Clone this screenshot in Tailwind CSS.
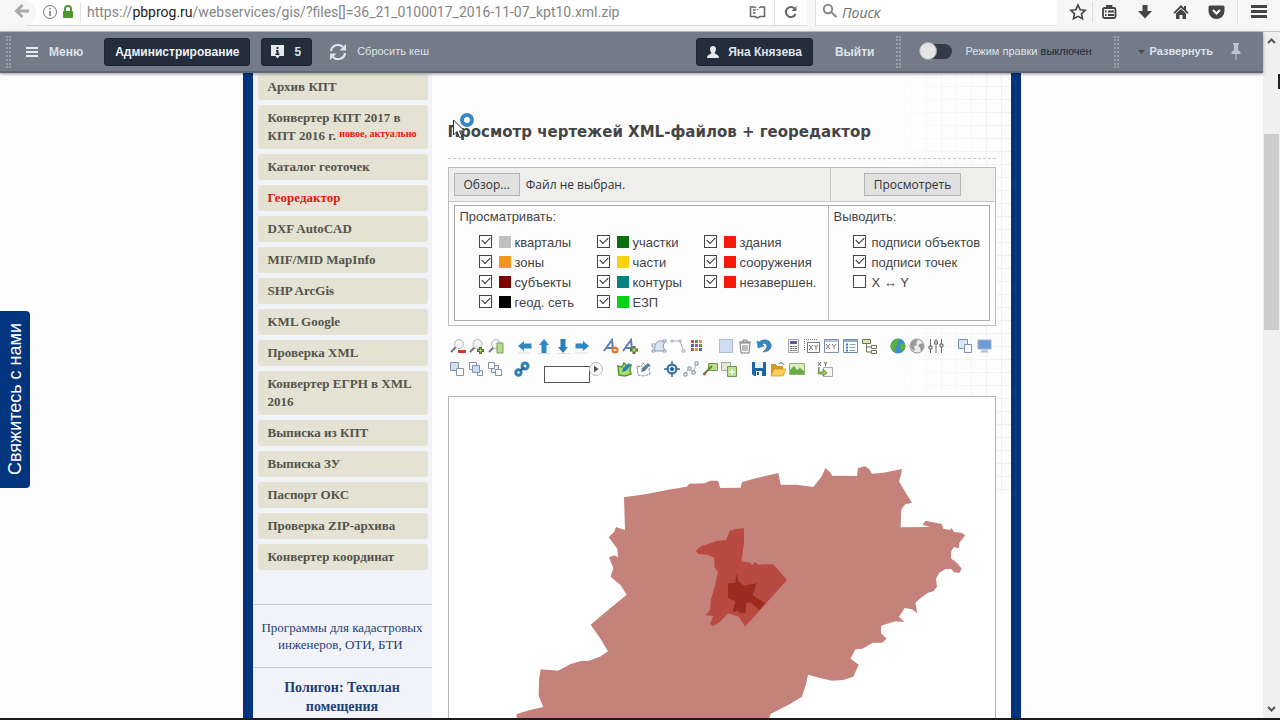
<!DOCTYPE html>
<html lang="ru">
<head>
    <meta charset="UTF-8">
    <meta name="viewport" content="width=device-width, initial-scale=1.0">
    <title>Просмотр чертежей XML-файлов + георедактор</title>
    <script src="https://cdn.jsdelivr.net/npm/@tailwindcss/browser@4"></script>
</head>
<body class="flex flex-col h-screen overflow-hidden bg-[#fdfdfd] border-b-2 border-[#1b1b1d] font-['Liberation_Sans',sans-serif]">

    <!-- Browser toolbar -->
    <header class="flex shrink-0 h-8 bg-[#f6f6f6] border-b border-[#c4c6ca] text-[#4a4a4a] font-['Open_Sans',sans-serif]">
        <div class="flex flex-1 items-center h-[26px] bg-white border-b border-[#d8d8d8]">
            <button aria-label="Назад" class="flex items-center justify-center w-9 h-[26px] rounded-r-full bg-[#f6f6f6] text-[#a9a9a9]">
                <svg class="size-4 mb-1 ml-2" viewBox="0 0 16 16" fill="none" stroke="currentColor" stroke-width="3"><path d="M15 8H3M8.500 2L2.500 8l6 6"/></svg>
            </button>
            <svg class="size-4 ml-[6px] mb-[2px]" viewBox="0 0 16 16" fill="none" stroke="#777"><circle cx="8" cy="8" r="6.500"/><path d="M8 7v5M8 4v1.500" stroke-width="1.500"/></svg>
            <svg class="w-3 h-4 ml-1 mb-[2px]" viewBox="0 0 12 16"><path d="M3 8V5a3 3 0 0 1 6 0v3" fill="none" stroke="#4c9a2e" stroke-width="2"/><rect x="1" y="7" width="10" height="7" rx="1" fill="#4c9a2e"/></svg>
            <div class="w-px h-5 ml-[6px] bg-[#e4e4e4]"></div>
            <div class="relative flex-1 ml-[6px] mb-[1px]">
                <p class="text-[14px] leading-6 text-[#858585] whitespace-nowrap font-['Roboto',sans-serif]">https://<span class="text-[#222]">pbprog.ru</span>/webservices/gis/?files[]=36_21_0100017_2016-11-07_kpt10.xml.zip</p>
                <input aria-label="Адрес" type="text" class="absolute inset-0 w-full bg-transparent outline-none">
            </div>
            <button aria-label="Режим чтения" class="mr-[8px] mb-[2px]">
                <svg class="w-[17px] h-4" viewBox="0 0 17 16" fill="none" stroke="#666" stroke-width="1.500"><path d="M7 4L5.500 3h-4v9.500H6l2.500 1.500 2.500-1.500h4.500V3h-4L10 4M8.500 5v1M4 6h2.500M4 9h2.500"/></svg>
            </button>
            <div class="w-px h-full bg-[#ddd]"></div>
            <button aria-label="Обновить" class="mx-[8px] mb-[2px]">
                <svg class="size-4" viewBox="0 0 16 16" fill="none" stroke="#666" stroke-width="2"><path d="M12.500 10A5 5 0 1 1 11.500 4.500"/><path d="M13.500 2v5h-5z" fill="#666" stroke="none"/></svg>
            </button>
        </div>
        <div class="flex items-center w-[242px] h-[26px] ml-[8px] pl-[6px] bg-white border-b border-l border-[#dedede]">
            <svg class="size-4 mb-[3px]" viewBox="0 0 16 16" fill="none" stroke="#888" stroke-width="2"><circle cx="6" cy="6" r="4.200"/><path d="M9 9l5.500 5"/></svg>
            <input aria-label="Поиск" type="search" placeholder="Поиск" class="w-40 ml-[4px] text-[14px] leading-6 italic outline-none placeholder:text-[#6d6d6d]">
        </div>
        <div class="flex items-center h-6 pl-[12px]">
            <button aria-label="Закладка"><svg class="size-[18px]" viewBox="0 0 18 18" fill="none" stroke="#444" stroke-width="1.600"><path d="M9 2l2.200 4.700 5 .6-3.700 3.500 1 5L9 13.300l-4.500 2.500 1-5L1.800 7.300l5-.6z"/></svg></button>
            <div class="w-px h-5 mx-[5px] bg-[#ddd]"></div>
            <button aria-label="Библиотека" class="ml-[3px]"><svg class="size-4" viewBox="0 0 16 16" fill="none" stroke="#444" stroke-width="1.800"><rect x="2" y="4" width="12.500" height="10" rx="1.500"/><path d="M6 4V2h4.500v2M4 7.500h1.500M7 7.500h6M4 11h1.500M7 11h6"/></svg></button>
            <button aria-label="Загрузки" class="ml-[20px]"><svg class="size-4" viewBox="0 0 16 16" fill="#444"><path d="M5.500 1h5v6H15l-7 7.500L1 7h4.500z"/></svg></button>
            <button aria-label="Домой" class="ml-[20px]"><svg class="size-4" viewBox="0 0 16 16" fill="#444"><path d="M8 1L.5 8.500l1.300 1.200L8 3.800l6.200 5.900 1.300-1.200-2.500-2.500V2h-2v2z"/><path d="M3 9.500L8 5l5 4.500V15H9.500v-4h-3v4H3z"/></svg></button>
            <button aria-label="Pocket" class="ml-[19px]"><svg class="w-[17px] h-4" viewBox="0 0 17 16"><path d="M2 1.500h13q1.500 0 1.500 1.500v4a8 8 0 0 1-16 0V3Q.5 1.500 2 1.500z" fill="#444"/><path d="M5 6l3.500 3.500L12 6" fill="none" stroke="#fff" stroke-width="2"/></svg></button>
            <div class="w-px h-6 ml-[12px] bg-[#ddd]"></div>
            <button aria-label="Меню браузера" class="mx-[13px]"><svg class="size-4" viewBox="0 0 16 16" fill="#444"><path d="M0 1h16v3H0zM0 6h16v3H0zM0 11h16v3H0z"/></svg></button>
        </div>
    </header>

    <div class="flex flex-1 min-h-0">
        <div class="relative flex flex-col flex-1 min-w-0">

            <!-- Admin panel -->
            <nav class="relative z-10 flex shrink-0 items-center h-[41px] px-[6px] bg-[#737b88] border-b-2 border-[#5f6772] shadow-[0_1px_3px_#0006] text-[12px] text-[#dde3ea] whitespace-nowrap">
                <div class="w-[5px] h-8 border-x-2 border-dotted border-[#98a0ab]"></div>
                <button class="flex items-center gap-[11px] ml-[15px] font-bold">
                    <svg class="w-3 h-3" viewBox="0 0 12 12" fill="#e6eaef"><path d="M0 1h12v2H0zM0 5h12v2H0zM0 9h12v2H0z"/></svg>
                    Меню
                </button>
                <button class="h-7 ml-[21px] px-[10px] rounded-[3px] bg-[#232d3c] border border-[#1c2430] font-bold text-[#eef1f5]">Администрирование</button>
                <button class="flex items-center gap-[9px] h-7 ml-[11px] pl-2 pr-[10px] rounded-[3px] bg-[#232d3c] border border-[#1c2430] font-bold">
                    <svg class="size-[15px]" viewBox="0 0 15 15"><path d="M1 1h13v11H9.500l-2 2.500-2-2.500H1z" fill="#e6eaef"/><path d="M6.500 3h2v2h-2zM6 6h2.500v3.500H9.500V11h-4V9.500h1v-2H6z" fill="#232d3c"/></svg>
                    5
                </button>
                <button class="flex items-center gap-[10px] ml-[17px]">
                    <svg class="w-[18px] h-[18px]" viewBox="0 0 18 18" fill="none" stroke="#dde3ea" stroke-width="2.200"><path d="M2 8a7 7 0 0 1 12-4M16 10a7 7 0 0 1-12 4"/><path d="M17 1v6.500h-6.500zM1 17v-6.500h6.500z" fill="#dde3ea" stroke="none"/></svg>
                    <span class="text-[11px]">Сбросить кеш</span>
                </button>
                <button class="flex items-center gap-[9px] h-7 ml-auto px-[10px] rounded-[3px] bg-[#232d3c] border border-[#1c2430] font-bold">
                    <svg class="w-3 h-3" viewBox="0 0 12 12" fill="#e6eaef"><path d="M6 0c2 0 3 1.500 3 3 0 2-1 3-1.500 4 0 1 4.500 1 4.500 5H0c0-4 4.500-4 4.500-5C4 6 3 5 3 3c0-1.500 1-3 3-3z"/></svg>
                    Яна Князева
                </button>
                <a href="#" class="ml-[22px] font-bold">Выйти</a>
                <div class="w-[5px] h-8 ml-[21px] border-x-2 border-dotted border-[#98a0ab]"></div>
                <label class="relative flex items-center gap-[14px] ml-[18px] text-[11px]">
                    <input type="checkbox" class="appearance-none w-[33px] h-[15px] rounded-full bg-[#333b48] before:block before:size-[18px] before:-mt-[2px] before:rounded-full before:bg-[#e4e4e4] before:border before:border-[#aaa]">
                    <span>Режим правки <span class="text-[#1f2733]">выключен</span></span>
                </label>
                <div class="w-[5px] h-8 ml-[22px] border-x-2 border-dotted border-[#98a0ab]"></div>
                <button class="flex items-center gap-[5px] ml-[19px] text-[11px] font-bold">
                    <svg class="w-[7px] h-1" viewBox="0 0 7 4" fill="#414955"><path d="M0 0h7L3.500 4z"/></svg>
                    Развернуть
                </button>
                <button aria-label="Закрепить" class="ml-[18px] mr-[16px]">
                    <svg class="w-[10px] h-[18px]" viewBox="0 0 10 18" fill="#bcc3cc"><path d="M2 0h6v1.500L7 2v5l2.500 2v2h-4v6h-1v-6h-4V9L3 7V2l-1-.5z"/></svg>
                </button>
            </nav>

            <!-- Site -->
            <div class="flex flex-1 min-h-0 w-full max-w-[778px] mx-auto border-x-[10px] border-[#02357e]">
                <aside class="shrink-0 w-[179px] overflow-hidden bg-[#f1f3f9] font-['Liberation_Serif',serif]">
                    <ul class="flex flex-col gap-[5px] px-[5px] pt-[1px] pr-[4px] text-[13px] leading-[18px] font-bold text-[#55544c] [&_a]:block [&_a]:rounded-[3px] [&_a]:bg-[#e3e2d3] [&_a]:pl-[10px] [&_a]:pr-1 [&_a]:py-1">
                        <li><a href="#">Архив КПТ</a></li>
                        <li><a href="#">Конвертер КПТ 2017 в<br>КПТ 2016 г. <span class="align-[3px] text-[10px] leading-none whitespace-nowrap text-[#e8170c]">новое, актуально</span></a></li>
                        <li><a href="#">Каталог геоточек</a></li>
                        <li><a href="#" class="text-[#dc1a10]">Георедактор</a></li>
                        <li><a href="#">DXF AutoCAD</a></li>
                        <li><a href="#">MIF/MID MapInfo</a></li>
                        <li><a href="#">SHP ArcGis</a></li>
                        <li><a href="#">KML Google</a></li>
                        <li><a href="#">Проверка XML</a></li>
                        <li><a href="#">Конвертер ЕГРН в XML 2016</a></li>
                        <li><a href="#">Выписка из КПТ</a></li>
                        <li><a href="#">Выписка ЗУ</a></li>
                        <li><a href="#">Паспорт ОКС</a></li>
                        <li><a href="#">Проверка ZIP-архива</a></li>
                        <li><a href="#">Конвертер координат</a></li>
                    </ul>
                    <div class="mt-[34px] py-[14px] border-y border-[#c9ccd6] text-center text-[13px] leading-[17px] text-[#1d3f78]">
                        <a href="#">Программы для кадастровых<br>инженеров, ОТИ, БТИ&nbsp;</a>
                    </div>
                    <div class="pt-[10px] text-center text-[14px] leading-[19px] font-bold text-[#1d3f78]">
                        <a href="#">Полигон: Техплан<br>помещения</a>
                    </div>
                </aside>

                <main class="relative flex flex-col flex-1 min-w-0 pt-[47px] pl-4 pr-[15px]">
                    <!-- faint squared paper behind the content -->
                    <svg class="absolute right-0 top-0 -z-10 w-[130px] h-[420px]" viewBox="0 0 130 420">
                        <defs>
                            <pattern id="cells" width="15" height="13" patternUnits="userSpaceOnUse"><path d="M0 .5h15M.5 0v13" stroke="#efefef" fill="none"/></pattern>
                            <linearGradient id="fade"><stop offset="0" stop-color="#fdfdfd"/><stop offset="1" stop-color="#fdfdfd" stop-opacity="0"/></linearGradient>
                        </defs>
                        <rect width="130" height="420" fill="url(#cells)"/>
                        <rect width="130" height="420" fill="url(#fade)"/>
                    </svg>

                    <h1 class="pb-[14px] border-b border-dashed border-[#c8c8c8] text-[15px] leading-6 font-bold text-[#454545] whitespace-nowrap font-['DejaVu_Sans',sans-serif]">Просмотр чертежей XML-файлов + георедактор</h1>

                    <form class="mt-[8px] bg-[#fdfdfd] border border-[#bdbdbd] text-[13px] text-[#444]">
                        <div class="flex h-[34px] bg-[#eeeeec] border-b border-[#c9c9c9] text-[12px] text-[#333] font-['Open_Sans',sans-serif]">
                            <div class="flex flex-1 items-center gap-[6px] pl-[5px]">
                                <button type="button" class="h-[23px] px-[9px] leading-5 bg-[#e0e0e0] border border-[#b4b4b4]">Обзор...</button>
                                <span>Файл не выбран.</span>
                            </div>
                            <div class="flex items-center justify-center w-[165px] border-l border-[#c9c9c9]">
                                <button type="button" class="h-[23px] px-[9px] leading-5 bg-[#e0e0e0] border border-[#b4b4b4]">Просмотреть</button>
                            </div>
                        </div>
                        <div class="flex h-[116px] mt-[3px] mx-[5px] mb-[4px] border border-[#ababab] leading-5 [&_label]:flex [&_label]:items-center [&_label]:whitespace-nowrap [&_input]:appearance-none [&_input]:relative [&_input]:size-[13px] [&_input]:-mt-1 [&_input]:border [&_input]:border-[#444] [&_input]:bg-white [&_input]:checked:before:absolute [&_input]:checked:before:left-[2px] [&_input]:checked:before:top-[1px] [&_input]:checked:before:w-2 [&_input]:checked:before:h-[5px] [&_input]:checked:before:border-l [&_input]:checked:before:border-b [&_input]:checked:before:border-[#222] [&_input]:checked:before:-rotate-45 [&_i]:size-3 [&_i]:ml-[7px] [&_i]:mr-1 [&_i]:-mt-[2px]">
                            <fieldset class="flex-1 pl-[5px]">
                                <legend class="pt-[1px] leading-5">Просматривать:</legend>
                                <div class="flex pl-[19px] pt-[6px]">
                                    <div class="w-[118px]">
                                        <label><input type="checkbox" checked><i class="bg-[#c0c0c0]"></i>кварталы</label>
                                        <label><input type="checkbox" checked><i class="bg-[#f7941d]"></i>зоны</label>
                                        <label><input type="checkbox" checked><i class="bg-[#800000]"></i>субъекты</label>
                                        <label><input type="checkbox" checked><i class="bg-black"></i>геод. сеть</label>
                                    </div>
                                    <div class="w-[107px]">
                                        <label><input type="checkbox" checked><i class="bg-[#0a6e0a]"></i>участки</label>
                                        <label><input type="checkbox" checked><i class="bg-[#fbd10e]"></i>части</label>
                                        <label><input type="checkbox" checked><i class="bg-[#058080]"></i>контуры</label>
                                        <label><input type="checkbox" checked><i class="bg-[#06d314]"></i>ЕЗП</label>
                                    </div>
                                    <div>
                                        <label><input type="checkbox" checked><i class="bg-[#f7190a]"></i>здания</label>
                                        <label><input type="checkbox" checked><i class="bg-[#f7190a]"></i>сооружения</label>
                                        <label><input type="checkbox" checked><i class="bg-[#f7190a]"></i>незавершен.</label>
                                    </div>
                                </div>
                            </fieldset>
                            <div class="w-[161px] pl-[5px] border-l border-[#bdbdbd]">
                                <fieldset>
                                    <legend class="pt-[1px] leading-5">Выводить:</legend>
                                    <div class="pl-[19px] pt-[6px] [&_label]:gap-[6px]">
                                        <label><input type="checkbox" checked>подписи объектов</label>
                                        <label><input type="checkbox" checked>подписи точек</label>
                                        <label><input type="checkbox">X ↔ Y</label>
                                    </div>
                                </fieldset>
                            </div>
                        </div>
                    </form>

                    <!-- Editor toolbars -->
                    <div class="flex gap-[13px] mt-[12px] pl-[2px] [&>div]:flex [&>div]:gap-[3px] [&_svg]:size-4">
                        <div>
                            <button aria-label="Уменьшить"><svg viewBox="0 0 16 16" fill="none"><path d="M6 9l-5 5" stroke="#777" stroke-width="2"/><circle cx="9" cy="6" r="4.500" fill="#f3f6f3" stroke="#b5b5b5"/><path d="M8 12h8v3H8z" fill="#d23a2c"/></svg></button>
                            <button aria-label="Увеличить"><svg viewBox="0 0 16 16" fill="none"><path d="M6 9l-5 5" stroke="#777" stroke-width="2"/><circle cx="8.500" cy="6" r="4.500" fill="#f3f6f3" stroke="#b5b5b5"/><path d="M11.500 9v7M8 12.500h7" stroke="#55752c" stroke-width="3"/><path d="M11.500 10.500v4M9.500 12.500h4" stroke="#a6d358"/></svg></button>
                            <button aria-label="Показать всё"><svg viewBox="0 0 16 16" fill="none"><path d="M6 9l-5 5" stroke="#777" stroke-width="2"/><circle cx="8" cy="6" r="4.500" fill="#f3f6f3" stroke="#b5b5b5"/><path d="M9 5h6v10H9z" fill="#b6da8a" stroke="#7d9e57"/></svg></button>
                        </div>
                        <div>
                            <button aria-label="Влево"><svg viewBox="0 0 16 16"><path d="M1 15h13" stroke="#ddd"/><path d="M1 8l6-5v2.500h7.500v5H7V13z" fill="#2d88c3"/></svg></button>
                            <button aria-label="Вверх"><svg viewBox="0 0 16 16"><path d="M2 15.500h12" stroke="#ddd"/><path d="M8 1l5 6h-2.500v8h-5V7H3z" fill="#2d88c3"/></svg></button>
                            <button aria-label="Вниз"><svg viewBox="0 0 16 16"><path d="M3 15.500h12" stroke="#ddd"/><path d="M8 15l5-6h-2.500V1h-5v8H3z" fill="#2d7fbc"/></svg></button>
                            <button aria-label="Вправо"><svg viewBox="0 0 16 16"><path d="M1 15h13" stroke="#ddd"/><path d="M15 8L9 3v2.500H1.500v5H9V13z" fill="#2d88c3"/></svg></button>
                        </div>
                        <div>
                            <button aria-label="Убрать подпись"><svg viewBox="0 0 16 16" fill="none"><path d="M1 13L9 2l1 10M4 10h6" stroke="#5d7fb5" stroke-width="2"/><circle cx="12" cy="12" r="3.500" fill="#e2742f"/><path d="M10.500 12h3" stroke="#fff" stroke-width="1.500"/></svg></button>
                            <button aria-label="Добавить подпись"><svg viewBox="0 0 16 16" fill="none"><path d="M1 13L9 2l1 10M4 10h6" stroke="#5d7fb5" stroke-width="2"/><path d="M12 8v8M8 12h8" stroke="#55752c" stroke-width="3"/><path d="M12 10v4M10 12h4" stroke="#c6e68a"/></svg></button>
                        </div>
                        <div>
                            <button aria-label="Полигон"><svg viewBox="0 0 16 16" fill="none" stroke="#8e9bb3"><path d="M3 7l5-4h6l-2 5 2 5H2l2-3z" fill="#d9e4f3"/><path d="M1 6h3v3H1zM1 12h3v2H1zM12 12h3v2h-3zM12 2h3v2h-3z" fill="#fff"/></svg></button>
                            <button aria-label="Линия"><svg viewBox="0 0 16 16" fill="none" stroke="#aab2bf"><path d="M2 3h8l3 9"/><path d="M1 2h2v2H1zM9 2h2v2H9zM12 12h3v2h-3z" fill="#fff"/></svg></button>
                            <button aria-label="Цвета"><svg viewBox="0 0 16 16"><path d="M2 2h3v3H2zM2 10h3v3H2z" fill="#c9553f"/><path d="M6 2h3v3H6zM10 6h3v3h-3z" fill="#4d9f52"/><path d="M10 2h3v3h-3zM6 10h3v3H6z" fill="#d99c2b"/><path d="M2 6h3v3H2zM10 10h3v3h-3z" fill="#4b6cb5"/><path d="M6 6h3v3H6z" fill="#9a5bb0"/></svg></button>
                        </div>
                        <div>
                            <button aria-label="Выделить"><svg viewBox="0 0 16 16"><path d="M1.500 1.500h13v13h-13z" fill="#cfdcf2" stroke="#7589b0" stroke-dasharray="1 1"/></svg></button>
                            <button aria-label="Удалить"><svg viewBox="0 0 16 16" fill="none" stroke="#7c7c7c"><path d="M3 5h10l-1 10H4zM2 4h12M6 4V2h4v2M6 7v6M8 7v6M10 7v6"/></svg></button>
                            <button aria-label="Отменить"><svg viewBox="0 0 16 16"><path d="M1 3l1 7 6-2-2-2c4-1.500 6 1 4 5l-3 3c7 0 9-5 8-8C13 .5 6 1 3.500 4z" fill="#3486c2" stroke="#24689c" stroke-width=".5"/></svg></button>
                        </div>
                        <div>
                            <button aria-label="Калькулятор"><svg viewBox="0 0 16 16"><path d="M3.500 1.500h10v13h-10z" fill="#f1f1f1" stroke="#a5a5a5"/><path d="M5 3h7v3H5z" fill="#5a5d9a"/><path d="M5 8.500h7M5 10.500h7M5 12.500h7" stroke="#777" stroke-dasharray="2 .5"/></svg></button>
                            <button aria-label="Координаты"><svg viewBox="0 0 16 16" fill="none" stroke="#777"><path d="M3.500 4.500h12v10h-12z" fill="#fff"/><path d="M.5 12V1.500h13" stroke-dasharray="1 1"/><path d="M5 7l4 5M9 7l-4 5M10.500 7l1.500 2.500L14 7M12 9.500V12"/></svg></button>
                            <button aria-label="Окно координат"><svg viewBox="0 0 16 16" fill="none"><path d="M1.500 1.500h14v13h-14z" fill="#fff" stroke="#7d8fa5"/><path d="M2 3h13" stroke="#b4c6dc" stroke-width="2"/><path d="M3 6l4 5M7 6l-4 5M9 6l2 2.500L13 6M11 8.500V11" stroke="#777"/></svg></button>
                            <button aria-label="Список"><svg viewBox="0 0 16 16" fill="none"><path d="M1.500 1.500h14v13h-14z" fill="#fff" stroke="#6b8cae"/><path d="M2 3h13" stroke="#91b1d4" stroke-width="2"/><path d="M4 6.500h2M4 9.500h2M4 12.500h2" stroke="#3c79b4" stroke-width="2"/><path d="M7.500 6.500h6M7.500 9.500h6M7.500 12.500h6" stroke="#86a6c6"/></svg></button>
                            <button aria-label="Дерево"><svg viewBox="0 0 16 16" fill="none" stroke="#6e7452"><path d="M1.500 1.500h8v4h-8z" fill="#dfe3b8"/><path d="M5.500 6v8H10M5.500 9H10M10.500 7.500h5v3h-5zM10.500 12.500h5v3h-5z"/></svg></button>
                        </div>
                        <div>
                            <button aria-label="Карта"><svg viewBox="0 0 16 16"><circle cx="8" cy="8" r="7.500" fill="#3a8ed0"/><path d="M3 2.500c3-2 5-2 6-1L7 5l1 2-3 2 1 5C2 13 0 9 .5 7zM10 7l4-2 1.500 3c0 3-2 5-4 6l-1-3z" fill="#58b23c"/></svg></button>
                            <button aria-label="Карта отключена"><svg viewBox="0 0 16 16"><circle cx="8" cy="8" r="7" fill="#ececec" stroke="#909090"/><path d="M3 3c3-2 5-2 6-1L7 5l1 2-3 1 1 5C3 12 1 9 1.500 7zM9 7l4-2 2 3c0 3-2 4-3 5l-1-3z" fill="#9a9a9a"/></svg></button>
                            <button aria-label="Настройки"><svg viewBox="0 0 16 16" fill="none" stroke="#6b6b6b"><path d="M2.500 1v14M8 1v14M13.500 1v14"/><path d="M1 8h3v3H1zM6.500 3h3v3h-3zM12 6h3v3h-3z" fill="#ddd"/></svg></button>
                        </div>
                        <div>
                            <button aria-label="Слои"><svg viewBox="0 0 16 16" stroke="#7b93ad"><path d="M1.500 1.500h9v9h-9z" fill="#d8e6f4"/><path d="M7.500 6.500h7v8h-7z" fill="#f4f8fc"/></svg></button>
                            <button aria-label="Экран"><svg viewBox="0 0 16 16"><path d="M2 2h13v9H2z" fill="#6f9bd8" stroke="#9bb0cc"/><path d="M6 12h5l2 2.500H4z" fill="#bcc3cd"/></svg></button>
                        </div>
                    </div>
                    <div class="flex items-start mt-[7px] pl-[1px] [&_svg]:size-4 [&>div]:flex [&>div]:gap-[3px]">
                        <div>
                            <button aria-label="На задний план"><svg viewBox="0 0 16 16" stroke="#8693a5"><path d="M1.500 1.500h8v8h-8z" fill="#d5dff0"/><path d="M7.500 7.500h7v7h-7z" fill="#fff"/></svg></button>
                            <button aria-label="Средний план"><svg viewBox="0 0 16 16" stroke="#8693a5"><path d="M1.500 1.500h7v7h-7zM9.500 9.500h5v5h-5z" fill="#fff"/><path d="M4.500 4.500h7v7h-7z" fill="#c8dcf2"/></svg></button>
                            <button aria-label="На передний план"><svg viewBox="0 0 16 16" stroke="#8693a5"><path d="M4.500 4.500h7v7h-7z" fill="#dfe9f5"/><path d="M1.500 1.500h6v6h-6zM8.500 8.500h6v6h-6z" fill="#fff"/></svg></button>
                        </div>
                        <div class="ml-[11px]">
                            <button aria-label="Связать"><svg viewBox="0 0 16 16" fill="none" stroke="#2f7fb8" stroke-width="3"><circle cx="11" cy="5" r="3"/><circle cx="4.500" cy="11.500" r="2.700"/><path d="M6 10l4-4" stroke="#1f639a" stroke-width="2"/></svg></button>
                        </div>
                        <div class="ml-[14px] gap-0!">
                            <input aria-label="Найти" type="text" class="w-[46px] h-[17px] mt-[5px] border border-[#555] bg-white px-1 text-[11px]">
                            <button aria-label="Перейти" class="-ml-[2px] h-4"><svg viewBox="0 0 16 16"><circle cx="8" cy="8" r="6.500" fill="#f7f7f7" stroke="#bbb"/><path d="M6 4.500l4.500 3.500L6 11.500z" fill="#555"/></svg></button>
                        </div>
                        <div class="ml-[12px]">
                            <button aria-label="Править полигон"><svg viewBox="0 0 16 16"><path d="M2 5l4 1 2-4 3 3 4-1-1 5 1 4-6 2-6-1z" fill="#aee06c" stroke="#4f9a3a" stroke-width="1.500"/><path d="M6 11l1-4 6-5 2 2-5 6z" fill="#2b82b4"/></svg></button>
                            <button aria-label="Править линию"><svg viewBox="0 0 16 16"><path d="M2 5l4 1 2-4 3 3 4-1-1 5 1 4-6 2-6-1z" fill="#fff" stroke="#8a908e" stroke-dasharray="3 1"/><path d="M6 11l1-4 6-5 2 2-5 6z" fill="#587f9c"/></svg></button>
                        </div>
                        <div class="ml-[13px]">
                            <button aria-label="Центр"><svg viewBox="0 0 16 16" fill="none" stroke="#35719c"><circle cx="8" cy="8" r="4.500" stroke-width="2" fill="#d5e6f2"/><path d="M8 0v5M8 11v5M0 8h5M11 8h5" stroke-width="1.500"/><circle cx="8" cy="8" r="1.500" fill="#205277"/></svg></button>
                            <button aria-label="Ломаная"><svg viewBox="0 0 16 16" fill="none" stroke="#808b95"><path d="M2 13l4-6 4 4 4-9" stroke="#9fb3c6"/><path d="M1 12h3v3H1zM5 6h3v3H5zM9 10h3v3H9zM12 1h3v3h-3z" fill="#fff"/></svg></button>
                            <button aria-label="Метка"><svg viewBox="0 0 16 16"><path d="M6.500 2.500h9v7h-9z" fill="#b9dc86" stroke="#74964c"/><path d="M10 5L2 13" stroke="#56883a" stroke-width="2"/><circle cx="2.500" cy="13" r="1.500" fill="#a05b4b"/></svg></button>
                            <button aria-label="Копировать"><svg viewBox="0 0 16 16"><path d="M.5 1.500h9v8h-9z" fill="#e0ebdc" stroke="#9aaa94"/><path d="M6.500 5.500h9v10h-9z" fill="#b8dc92" stroke="#6f9851"/><path d="M8 11h6M11 8v6" stroke="#fff"/></svg></button>
                        </div>
                        <div class="ml-[14px]">
                            <button aria-label="Сохранить"><svg viewBox="0 0 16 16"><path d="M1 1h14v14H3l-2-2z" fill="#1c67a3"/><path d="M4 1h8v6H4z" fill="#e8f2fa"/><path d="M5 10h6v5H5z" fill="#fff"/><path d="M6 11h2v3H6z" fill="#1c67a3"/></svg></button>
                            <button aria-label="Открыть"><svg viewBox="0 0 16 16"><path d="M1 3h5l1 2h6v10H1z" fill="#d59a24"/><path d="M4 8h12l-3 7H1z" fill="#fbcf58" stroke="#cc9020" stroke-width=".7"/><path d="M9 3c2-2 4-1 5 1" fill="none" stroke="#555"/></svg></button>
                            <button aria-label="Картинка"><svg viewBox="0 0 16 16"><path d="M.5 2.500h15v11H.5z" fill="#d9efc4" stroke="#8fb079"/><path d="M1 13V9l4-4 3 4 3-2 4 3v3z" fill="#6aa843"/></svg></button>
                        </div>
                        <div class="ml-[12px]">
                            <button aria-label="Импорт координат"><svg viewBox="0 0 16 16" fill="none" stroke="#666"><path d="M1 1l3 4M4 1L1 5M7 1l1.500 2L10 1M8.500 3v2"/><path d="M6.500 6.500h9v9h-9z" fill="#f7f7f7" stroke="#aaa"/><path d="M2 6v5h4v-3l4 4-4 3v-2H1z" fill="#9ac55a" stroke="#5f843a" stroke-width=".8"/></svg></button>
                        </div>
                    </div>

                    <!-- Map -->
                    <div class="flex-1 min-h-0 mt-[13px] bg-white border border-b-0 border-[#b5b5b5] overflow-hidden">
                        <svg class="w-full" viewBox="-153 -129 1638 963">
                            <path fill="#c5827b" d="M372 172L440 162 500 150 560 140 568 131 615 130 630 122 654 122 660 144 722 143 726 126 770 114 835 99 842 134 890 134 940 141 966 108 976 84 992 98 996 107 1071 108 1074 84 1095 79 1108 88 1116 101 1150 98 1206 87 1202 108 1197 124 1218 160 1236 188 1216 193 1204 208 1202 262 1290 261 1268 254 1276 242 1325 252 1330 266 1350 270 1355 264 1362 276 1384 278 1396 286 1378 308 1376 325 1362 322 1354 332 1353 355 1372 370 1385 386 1378 399 1362 397 1354 387 1336 387 1318 398 1308 416 1311 440 1300 454 1284 458 1262 474 1246 488 1252 520 1236 508 1214 504 1197 530 1214 546 1186 544 1143 557 1143 580 1160 596 1146 608 1118 608 1088 626 1066 628 1052 656 1076 674 1060 710 1030 720 996 722 960 714 924 704 918 732 906 770 870 792 812 822 808 834 50 834 50 822 90 810 130 801 116 768 117 720 122 688 174 692 212 672 246 662 264 663 300 650 324 634 300 594 272 554 324 510 380 464 362 436 332 410 340 384 327 352 342 346 354 352 352 326 326 292 342 276 348 261 375 270Z"/>
                            <path fill="#b84a41" d="M588 332L600 320 650 303 678 300 690 272 710 267 732 265 732 310 724 364 752 368 756 376 764 366 776 374 820 373 861 420 735 560 716 530 684 520 664 542 640 559 630 552 640 528 616 526 630 510 632 480 644 440 654 396 644 384 642 352 620 344 594 342Z"/>
                            <path fill="#9c2a1e" d="M684 430L706 428 710 400 716 424 732 437 770 430 758 466 764 470 796 490 778 510 750 486 738 490 736 520 722 520 714 512 698 516 706 484 684 474Z"/>
                        </svg>
                    </div>

                    <!-- busy pointer -->
                    <svg class="absolute left-[20px] top-[36px] w-[26px] h-[30px]" viewBox="0 0 26 30">
                        <circle cx="15" cy="11" r="5" fill="#fff" stroke="#3a87c8" stroke-width="4"/>
                        <path d="M1.500 11v15l3.500-3.500 2.500 6 2.500-1-2.500-5.500h5z" fill="#fff" stroke="#333"/>
                    </svg>
                </main>
            </div>

            <button class="absolute left-0 top-[279px] z-10 flex items-center justify-center w-[30px] h-[177px] rounded-r-[4px] bg-[#02357e] text-white text-[18px]">
                <span class="[writing-mode:vertical-rl] rotate-180 whitespace-nowrap">Свяжитесь с нами</span>
            </button>
        </div>

        <!-- Window scrollbar -->
        <div class="flex flex-col items-center shrink-0 w-[17px] bg-[#f0f0f0]">
            <svg class="w-[9px] h-[18px]" viewBox="0 0 9 18" fill="none" stroke="#555" stroke-width="2"><path d="M1 11l3.500-3.500L8 11"/></svg>
            <div class="self-end w-[2px] h-[15px] mt-[24px] bg-[#222]"></div>
            <div class="w-[15px] h-[196px] mt-[45px] bg-[#cdcdcd]"></div>
            <svg class="w-[9px] h-[18px] mt-auto" viewBox="0 0 9 18" fill="none" stroke="#555" stroke-width="2"><path d="M1 7l3.500 3.500L8 7"/></svg>
        </div>
    </div>
</body>
</html>
